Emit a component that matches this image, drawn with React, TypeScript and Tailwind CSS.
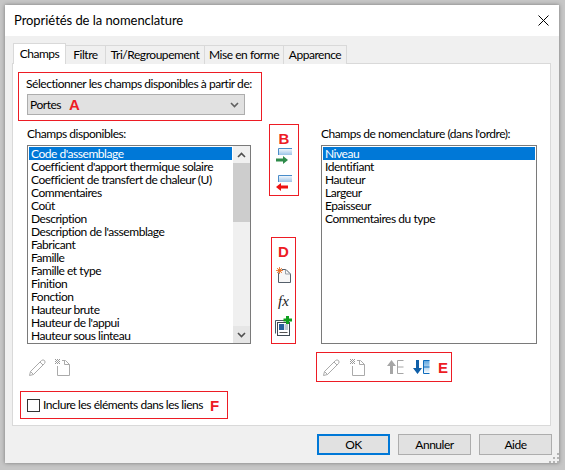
import React from "react";

const LEFT = ["Code d'assemblage","Coefficient d'apport thermique solaire","Coefficient de transfert de chaleur (U)","Commentaires","Coût","Description","Description de l'assemblage","Fabricant","Famille","Famille et type","Finition","Fonction","Hauteur brute","Hauteur de l'appui","Hauteur sous linteau"];
const RIGHT = ["Niveau","Identifiant","Hauteur","Largeur","Epaisseur","Commentaires du type"];

function Letter({ c, className = "" }: { c: string; className?: string }) {
  return <span className={"block font-bold text-[15px] leading-[17px] tracking-normal text-[#ed1c24] [font-family:'Liberation_Sans',sans-serif] " + className}>{c}</span>;
}

function Pencil() {
  return (
    <svg width="17" height="17" viewBox="0 0 17 17" fill="none" stroke="#aaaaaa" strokeWidth="1" className="block">
      <path d="M0.5 16.5 L1.5 12.5 L12.5 1.5 Q14 0.2 15.5 1.5 Q16.8 3 15.5 4.5 L4.5 15.5 Z" />
      <path d="M1.5 12.5 L4.5 15.5 M11 3 L14 6" />
    </svg>
  );
}
function DelDoc() {
  const dots = [[0,0],[2,0],[4,0],[1,1],[3,1],[0,2],[2,2],[4,2],[1,3],[3,3],[0,4],[2,4],[4,4]];
  return (
    <svg width="15" height="17" viewBox="0 0 15 17" fill="none" className="block">
      <path d="M2.5 7 V16.5 H14.5 V5.5 L10.5 1.5 H7" stroke="#aaaaaa" />
      <path d="M9.5 1.5 V5.5 H14.5" stroke="#aaaaaa" />
      {dots.map(([x, y]) => <rect key={x + "-" + y} x={x} y={y} width="1" height="1" fill="#999999" />)}
    </svg>
  );
}
function ListBar({ dir }: { dir: "r" | "l" }) {
  const green = dir === "r";
  const col = green ? "#2e8b4a" : "#ee1111";
  return (
    <svg width="17" height="16" viewBox="0 0 17 16" className="block">
      <defs>
        <linearGradient id={"g" + dir} x1="0" y1="0" x2="0" y2="1">
          <stop offset="0" stopColor="#ffffff" />
          <stop offset="1" stopColor="#9cc4e8" />
        </linearGradient>
      </defs>
      <rect x="2" y="0" width="14" height="7" fill={"url(#g" + dir + ")"} />
      <path d="M16 0.5 H2.5 V7" fill="none" stroke="#4a8cc9" />
      {green ? (
        <path d="M0 10.5 H7 V8 L12 12 L7 16 V13.5 H0 Z" fill={col} />
      ) : (
        <path d="M12 10.5 H5 V8 L0 12 L5 16 V13.5 H12 Z" fill={col} />
      )}
    </svg>
  );
}
function NewDoc() {
  return (
    <svg width="15" height="16" viewBox="0 0 15 16" fill="none" className="block">
      <path d="M2.5 6 L6 2.5 H10 L14.5 7 V15.5 H2.5 Z" fill="#f7f7f7" stroke="#555f6a" />
      <path d="M9.5 2.5 V7 H14.5" stroke="#9aa2aa" />
      <circle cx="3.5" cy="3.5" r="2" fill="#f9c23c" />
      <path d="M3.5 0v7M0 3.5h7M1 1l5 5M6 1L1 6" stroke="#e8642a" strokeWidth="0.8" />
    </svg>
  );
}
function Sheet() {
  return (
    <svg width="17" height="20" viewBox="0 0 17 20" fill="none" className="block">
      <path d="M0.5 17.5 V4.5 H10" stroke="#4b5560" />
      <rect x="2.5" y="6.5" width="12" height="13" fill="#fff" stroke="#3e4852" />
      <rect x="4" y="8" width="5" height="6" fill="#245e9c" />
      <rect x="9.5" y="8" width="3.5" height="6" fill="#bcc7d2" />
      <path d="M4.5 16.5 H12.5" stroke="#555" />
      <path d="M11 0 H14 V2.5 H17 V5.5 H14 V8 H11 V5.5 H8.5 V2.5 H11 Z" fill="#0ea01e" />
    </svg>
  );
}
function MoveUp() {
  return (
    <svg width="17" height="14" viewBox="0 0 17 14" fill="none" className="block">
      <path d="M4.5 0 L9 6 H6 V14 H3 V6 H0 Z" fill="#a6a6a6" />
      <path d="M16.5 0.5 H10.5 V13.5 H16.5 M10.5 7 H16.5" stroke="#a6a6a6" />
    </svg>
  );
}
function MoveDown() {
  return (
    <svg width="17" height="14" viewBox="0 0 17 14" fill="none" className="block">
      <defs>
        <linearGradient id="md" x1="0" y1="0" x2="0" y2="1">
          <stop offset="0" stopColor="#5ea6e0" />
          <stop offset="1" stopColor="#ffffff" />
        </linearGradient>
      </defs>
      <rect x="10.5" y="0.5" width="6" height="13" fill="url(#md)" />
      <path d="M16.5 0.5 H10.5 V13.5 H16.5 M10.5 7 H16.5" stroke="#0f6cbd" />
      <path d="M4.5 14 L9 8 H6 V0 H3 V8 H0 Z" fill="#0f5fa8" />
    </svg>
  );
}
function Chevron({ up = false, color = "#505050" }: { up?: boolean; color?: string }) {
  return (
    <svg width="9" height="6" viewBox="0 0 9 6" fill="none" stroke={color} strokeWidth="1.6" className={up ? "rotate-180" : ""}>
      <path d="M1 1 L4.5 4.5 L8 1" />
    </svg>
  );
}
function RedBox({ className, children }: { className: string; children: React.ReactNode }) {
  return <div className={"border border-[#ed1c24] " + className}>{children}</div>;
}
function Btn({ label, primary = false }: { label: string; primary?: boolean }) {
  return (
    <div className={"w-[73px] h-[21px] flex items-center justify-center bg-[#e1e1e1] " + (primary ? "border-2 border-[#0078d7]" : "border border-[#adadad]")}>
      {label}
    </div>
  );
}
function List({ items, scroll = false, width }: { items: string[]; scroll?: boolean; width: string }) {
  return (
    <div className={"h-[199px] border border-[#7a7a7a] bg-white flex overflow-hidden " + width}>
      <div className="flex-1 min-w-0 px-[1px] pt-[1px] overflow-hidden">
        {items.map((t, i) => (
          <div key={t} className={"h-[13px] leading-[13px] pl-[2px] whitespace-nowrap " + (i === 0 ? "bg-[#0078d7] text-white" : "")}>{t}</div>
        ))}
      </div>
      {scroll && (
        <div className="w-[17px] shrink-0 bg-[#f0f0f0] flex flex-col">
          <div className="h-[17px] flex items-center justify-center"><Chevron up /></div>
          <div className="h-[59px] bg-[#cdcdcd]" />
          <div className="flex-1" />
          <div className="h-[17px] flex items-center justify-center bg-[#e6e6e6]"><Chevron /></div>
        </div>
      )}
    </div>
  );
}
const TAB = "h-[19px] mt-[2px] bg-[#f0f0f0] border border-b-0 border-[#d9d9d9] flex items-center justify-center -ml-px";

export default function App() {
  return (
    <div className="w-[565px] h-[470px] bg-[#c6c6c6] pt-[5px] pl-[5px] overflow-hidden text-[12px] text-black [font-family:'Lato',sans-serif] tracking-[-0.46px]">
      <div className="w-[554px] h-[458px] bg-[#f0f0f0] flex flex-col shadow-[0_0_4px_rgba(0,0,0,0.4)] relative">
        <div className="h-[31px] bg-white flex items-center justify-between pl-[9px] pr-[10px] shrink-0">
          <span className="text-[13px] tracking-[-0.05px]">Propriétés de la nomenclature</span>
          <svg width="11" height="11" viewBox="0 0 11 11" stroke="#000" strokeWidth="1"><path d="M0.5 0.5 L10.5 10.5 M10.5 0.5 L0.5 10.5" /></svg>
        </div>
        <div className="flex h-[21px] pl-[8px] mt-[7px] shrink-0 relative z-10">
          <div className="w-[53px] h-[21px] bg-white border border-b-0 border-[#d9d9d9] flex items-center justify-center">Champs</div>
          <div className={TAB + " w-[41px]"}>Filtre</div>
          <div className={TAB + " w-[100px]"}>Tri/Regroupement</div>
          <div className={TAB + " w-[80px]"}>Mise en forme</div>
          <div className={TAB + " w-[64px]"}>Apparence</div>
        </div>
        <div className="ml-[7px] w-[539px] h-[363px] -mt-px bg-white border border-[#d9d9d9] pl-[5px] pt-[8px]">
          <RedBox className="w-[244px] h-[49px] pl-[7px] pt-[2px]">
            <div className="h-[17px] leading-[17px] whitespace-nowrap">Sélectionner les champs disponibles à partir de:</div>
            <div className="mt-[2px] ml-px w-[218px] h-[21px] bg-[#e1e1e1] border border-[#adadad] flex items-center justify-between pl-[2px] pr-[5px]">
              <div className="flex items-center gap-[7px]"><span className="w-[32px]">Portes</span><Letter c="A" /></div>
              <Chevron color="#606060" />
            </div>
          </RedBox>
          <div className="flex">
            <div className="w-[251px] pl-[9px] shrink-0">
              <div className="h-[14px] leading-[14px] mt-[6px] mb-[4px]">Champs disponibles:</div>
              <List items={LEFT} scroll width="w-[224px]" />
            </div>
            <div className="w-[52px] shrink-0 flex flex-col pt-[3px]">
              <RedBox className="w-[30px] h-[72px] flex flex-col items-center">
                <Letter c="B" className="mt-[5px]" />
                <div className="mt-[1px]"><ListBar dir="r" /></div>
                <div className="mt-[11px]"><ListBar dir="l" /></div>
              </RedBox>
              <RedBox className="w-[25px] ml-[2px] mt-[41px] h-[107px] flex flex-col items-center">
                <Letter c="D" className="mt-[5px]" />
                <div className="mt-[7px]"><NewDoc /></div>
                <div className="mt-[9px] h-[18px] leading-[18px] text-[15px] tracking-normal italic text-[#222] [font-family:'Liberation_Serif',serif]">fx</div>
                <div className="mt-[6px]"><Sheet /></div>
              </RedBox>
            </div>
            <div className="flex-1">
              <div className="h-[14px] leading-[14px] mt-[6px] mb-[4px] whitespace-nowrap">Champs de nomenclature (dans l'ordre):</div>
              <List items={RIGHT} width="w-[216px]" />
            </div>
          </div>
          <div className="flex h-[30px] mt-[8px]">
            <div className="w-[298px] shrink-0 pl-[11px] pt-[7px] flex gap-[9px]">
              <Pencil />
              <DelDoc />
            </div>
            <RedBox className="w-[136px] h-[30px] flex items-center pl-[6px]">
              <Pencil />
              <div className="ml-[10px]"><DelDoc /></div>
              <div className="ml-[22px]"><MoveUp /></div>
              <div className="ml-[9px]"><MoveDown /></div>
              <Letter c="E" className="ml-[8px]" />
            </RedBox>
          </div>
          <RedBox className="w-[208px] h-[28px] mt-[9px] ml-[2px] flex items-center pl-[6px]">
            <div className="w-[13px] h-[13px] shrink-0 border border-[#333] bg-white mr-[3px]" />
            <span className="whitespace-nowrap">Inclure les éléments dans les liens</span>
            <Letter c="F" className="ml-[7px]" />
          </RedBox>
        </div>
        <div className="flex justify-end gap-[8px] pr-[7px] mt-[8px]">
          <Btn label="OK" primary />
          <Btn label="Annuler" />
          <Btn label="Aide" />
        </div>
        <svg width="10" height="10" viewBox="0 0 10 10" fill="#b4b4b4" className="absolute right-0 bottom-0">
          <rect x="8" y="0" width="2" height="2" />
          <rect x="4" y="4" width="2" height="2" />
          <rect x="8" y="4" width="2" height="2" />
          <rect x="0" y="8" width="2" height="2" />
          <rect x="4" y="8" width="2" height="2" />
          <rect x="8" y="8" width="2" height="2" />
        </svg>
      </div>
    </div>
  );
}
